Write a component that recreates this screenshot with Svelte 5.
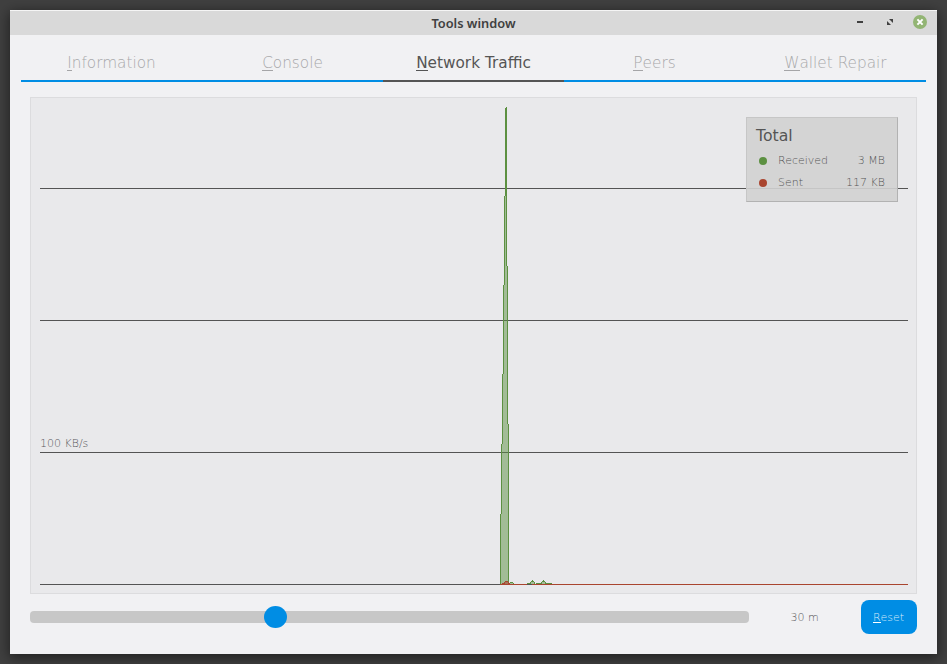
<script>
  const tabs = ['Information', 'Console', 'Network Traffic', 'Peers', 'Wallet Repair'];
  const active = 2;
  const grid = [91, 223, 355, 487];
  // One entry per band of the spike: top, bottom, left edge, right edge
  const bands = [
    [11, 99, 475, 476], [99, 169, 474, 476], [169, 188, 474, 477],
    [188, 277, 473, 477], [277, 327, 472, 477], [327, 347, 472, 478],
    [347, 417, 471, 478], [417, 487, 470, 478]
  ];
</script>

<div class="desktop">
  <div class="window">
    <header>
      <h1>Tools window</h1>
      <div class="controls">
        <svg width="80" height="24" viewBox="850 11 80 24">
          <rect x="857" y="21" width="6" height="2" fill="#404040" />
          <path d="M889 19h4v4zM887 21l4 4h-4z" fill="#404040" />
          <circle cx="920" cy="22" r="7" fill="#93b574" />
          <path d="M917.4 19.4l5.2 5.2M922.6 19.4l-5.2 5.2" stroke="#fff" stroke-width="2" />
        </svg>
      </div>
    </header>

    <nav>
      {#each tabs as tab, i}
        <div class="tab" class:active={i === active}><span><u>{tab[0]}</u>{tab.slice(1)}</span></div>
      {/each}
    </nav>

    <main>
      <section class="chart">
        <svg class="plot" width="885" height="495" viewBox="0 0 885 495" shape-rendering="crispEdges">
          {#each grid as y}
            <rect x="9" y={y - 1} width="868" height="1" fill="#545454" />
          {/each}
          {#each bands as [t, b, l, r]}
            <rect x={l - 1} y={t - 1} width={r - l + 1} height={b - t} fill="#5c9041" fill-opacity=".5" />
            <rect x={l - 1} y={t - 1} width="1" height={b - t} fill="#5c9041" />
            <rect x={r - 1} y={t - 1} width="1" height={b - t} fill="#5c9041" />
          {/each}
          <rect x="475" y="9" width="1" height="1" fill="#5c9041" />
          <path d="M479 484h3v1h1v1h-5v-1h1zM496 485h3v-1h1v-1h1v-1h1v1h1v1h1v2h-8zM505 485h5v-1h1v-1h1v-1h1v1h1v1h1v1h1v1h-11zM516 485h5v1h-5z" fill="#5c9041" />
          <path d="M479 485h3v1h-3zM500 484h3v2h-3zM511 484h3v2h-3z" fill="#a3bd98" />
          <path d="M469 486h408v1h-408zM471 485h2v-1h1v-1h3v1h1v1h1v1h-8z" fill="#a9452f" />
          <path d="M474 484h3v2h-3z" fill="#a67458" />
          <rect x="496" y="486" width="5" height="1" fill="#545454" />
        </svg>
        <span class="scale">100 KB/s</span>
        <aside>
          <h2>Total</h2>
          <div class="row"><i class="green"></i><span class="name">Received</span><span class="val">3 MB</span></div>
          <div class="row"><i class="red"></i><span class="name">Sent</span><span class="val">117 KB</span></div>
        </aside>
      </section>

      <footer>
        <div class="slider"><div class="knob"></div></div>
        <span class="range">30 m</span>
        <button><span><u>R</u>eset</span></button>
      </footer>
    </main>
  </div>
</div>

<style>
  :global(body) { margin: 0; }
  .desktop {
    box-sizing: border-box; width: 947px; height: 664px; padding: 10px; overflow: hidden;
    background: #404040;
    font-family: "DejaVu Sans", sans-serif;
  }
  .window {
    display: flex; flex-direction: column; width: 927px; height: 644px;
    background: #f1f1f3; box-shadow: 0 3px 12px 1px rgba(0, 0, 0, .5);
  }
  header {
    box-sizing: border-box; height: 25px; flex: none; display: grid;
    grid-template-columns: 87px 1fr 87px; background: #d9d9d9; border-top: 1px solid #f5f5f5;
  }
  h1 {
    grid-column: 2; margin: 0; text-align: center; color: #404040;
    font: 600 12.8px/24px "Noto Sans", sans-serif; height: 24px;
  }
  .controls { grid-column: 3; height: 24px; }
  .controls svg { display: block; }
  u { display: inline-block; text-decoration: none; border-bottom: 1px solid #a5a5a7; }
  nav { display: flex; height: 47px; flex: none; margin: 0 11px; }
  .tab {
    box-sizing: border-box; width: 181px; border-bottom: 2px solid #008de4; text-align: center;
    font-size: 15.3px; line-height: 18px; padding-top: 19px; font-weight: 200; color: #a8a8aa;
  }
  .tab u { height: 16px; }
  .active { font-weight: 400; color: #555; border-color: #555; }
  .active u { border-color: #555; }
  main { padding: 15px 20px 0; }
  .chart {
    position: relative; box-sizing: border-box; width: 887px; height: 497px;
    background: #e9e9eb; border: 1px solid #dcdcde;
  }
  .plot { display: block; }
  .scale { position: absolute; left: 9px; top: 339px; font-size: 11px; line-height: 14px; font-weight: 200; color: #58585b; }
  aside {
    position: absolute; left: 715px; top: 19px; box-sizing: border-box; width: 152px; height: 85px;
    padding: 9px 12px 0 9px; background: rgba(210, 210, 210, .9);
    border: 1px solid #c6c6c6; border-right-color: #b2b2b2; border-bottom-color: #b2b2b2;
  }
  h2 { margin: 0 0 6px; font-size: 15.7px; line-height: 18px; font-weight: 400; color: #555; }
  .row { display: flex; align-items: center; height: 18px; margin-bottom: 4px; font-size: 11px; font-weight: 200; color: #555; }
  i { width: 8px; height: 8px; margin: 2px 11px 0 3px; border-radius: 50%; }
  .green { background: #5c9041; }
  .red { background: #a9452f; }
  .val { margin-left: auto; }
  footer { display: flex; align-items: center; height: 34px; margin-top: 6px; }
  .slider { width: 719px; height: 12px; border-radius: 4px; background: #c7c7c7; display: flex; align-items: center; }
  .knob { width: 23px; height: 22px; flex: none; margin-left: 234px; border-radius: 50%; background: #008de4; }
  .range { width: 111px; margin-right: 1px; text-align: center; font-size: 11px; font-weight: 200; color: #58585b; }
  button {
    width: 56px; height: 34px; padding: 0 1px 0 0; border: 0; border-radius: 8px; background: #008de4;
    color: #d5eafa; font: 200 11px/13px "DejaVu Sans", sans-serif;
  }
  button u { height: 11px; border-color: #fff; }
</style>
